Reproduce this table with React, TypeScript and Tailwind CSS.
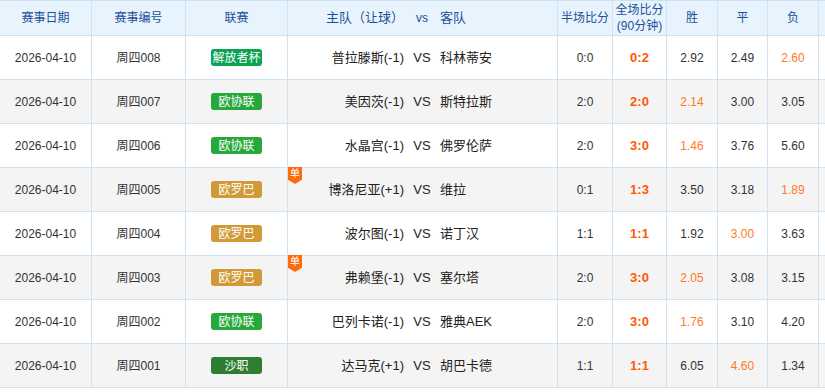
import React from "react";

type Row = {
  no: string;
  league: string;
  lc: string;
  dan?: boolean;
  home: string;
  away: string;
  half: string;
  full: string;
  odds: [string, string, string];
  hi: number;
};

const rows: Row[] = [
  { no: "周四008", league: "解放者杯", lc: "bg-[#0ba352]", home: "普拉滕斯(-1)", away: "科林蒂安", half: "0:0", full: "0:2", odds: ["2.92", "2.49", "2.60"], hi: 2 },
  { no: "周四007", league: "欧协联", lc: "bg-[#27a83b]", home: "美因茨(-1)", away: "斯特拉斯", half: "2:0", full: "2:0", odds: ["2.14", "3.00", "3.05"], hi: 0 },
  { no: "周四006", league: "欧协联", lc: "bg-[#27a83b]", home: "水晶宫(-1)", away: "佛罗伦萨", half: "2:0", full: "3:0", odds: ["1.46", "3.76", "5.60"], hi: 0 },
  { no: "周四005", league: "欧罗巴", lc: "bg-[#d19a36]", dan: true, home: "博洛尼亚(+1)", away: "维拉", half: "0:1", full: "1:3", odds: ["3.50", "3.18", "1.89"], hi: 2 },
  { no: "周四004", league: "欧罗巴", lc: "bg-[#d19a36]", home: "波尔图(-1)", away: "诺丁汉", half: "1:1", full: "1:1", odds: ["1.92", "3.00", "3.63"], hi: 1 },
  { no: "周四003", league: "欧罗巴", lc: "bg-[#d19a36]", dan: true, home: "弗赖堡(-1)", away: "塞尔塔", half: "2:0", full: "3:0", odds: ["2.05", "3.08", "3.15"], hi: 0 },
  { no: "周四002", league: "欧协联", lc: "bg-[#27a83b]", home: "巴列卡诺(-1)", away: "雅典AEK", half: "2:0", full: "3:0", odds: ["1.76", "3.10", "4.20"], hi: 0 },
  { no: "周四001", league: "沙职", lc: "bg-[#2e7d32]", home: "达马克(+1)", away: "胡巴卡德", half: "1:1", full: "1:1", odds: ["6.05", "4.60", "1.34"], hi: 1 },
];

const cols = "grid grid-cols-[92px_94px_102px_270px_55px_54px_51px_50px_51px_60px]";
const cell = "border-r border-b border-[#cfe2f2] flex items-center justify-center";

export default function App() {
  return (
    <div
      className="w-[825px] h-[392px] overflow-hidden bg-white text-[12px] text-[#333]"
      style={{ fontFamily: '"Liberation Sans", "Noto Sans CJK SC", sans-serif' }}
    >
      <div className={`${cols} h-[36px] bg-[#e8f4fd] text-[#1f4f9a] border-t border-[#cfe2f2]`}>
        <div className={cell}>赛事日期</div>
        <div className={cell}>赛事编号</div>
        <div className={cell}>联赛</div>
        <div className={`${cell} text-[13px]`}>
          <div className="flex items-center w-full">
            <span className="w-[116px] text-right">主队（让球）</span>
            <span className="w-[36px] text-center text-[12px]">vs</span>
            <span>客队</span>
          </div>
        </div>
        <div className={cell}>半场比分</div>
        <div className={`${cell} flex-col leading-[16px]`}>
          <span>全场比分</span>
          <span>(90分钟)</span>
        </div>
        <div className={cell}>胜</div>
        <div className={cell}>平</div>
        <div className={cell}>负</div>
        <div className={cell}></div>
      </div>
      {rows.map((r, i) => (
        <div key={r.no} className={`${cols} h-[44px] ${i % 2 === 1 ? "bg-[#f4f4f4]" : "bg-white"}`}>
          <div className={cell}>2026-04-10</div>
          <div className={cell}>{r.no}</div>
          <div className={cell}>
            <span className={`${r.lc} w-[51px] h-[17px] rounded-[3px] text-white flex items-center justify-center leading-none`}>
              {r.league}
            </span>
          </div>
          <div className={`${cell} relative text-[13px] text-[#222]`}>
            {r.dan && (
              <span className="absolute left-0 top-[-1px] w-[14px] h-[17px] bg-[#ff6a0d] text-white text-[10px] leading-[13px] text-center [clip-path:polygon(0_0,100%_0,100%_75%,50%_100%,0_75%)]">
                单
              </span>
            )}
            <div className="flex items-center w-full">
              <span className="w-[116px] text-right">{r.home}</span>
              <span className="w-[36px] text-center">VS</span>
              <span>{r.away}</span>
            </div>
          </div>
          <div className={cell}>{r.half}</div>
          <div className={`${cell} text-[13px] font-bold text-[#ff5a00]`}>{r.full}</div>
          {r.odds.map((o, k) => (
            <div key={k} className={`${cell} ${k === r.hi ? "text-[#ff7a24]" : ""}`}>{o}</div>
          ))}
          <div className={cell}></div>
        </div>
      ))}
    </div>
  );
}
